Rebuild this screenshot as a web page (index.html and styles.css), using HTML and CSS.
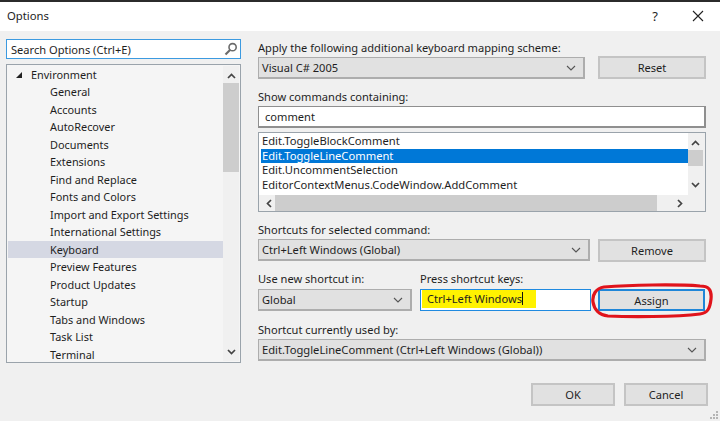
FILE: index.html
```html
<!DOCTYPE html>
<html lang="en">
<head>
<meta charset="utf-8">
<title>Options</title>
<link rel="stylesheet" href="styles.css">
</head>
<body>
<div class="dialog">
  <div class="edge"></div>
  <header class="titlebar">
    <span class="title">Options</span>
    <span class="help">?</span>
    <svg class="close" width="12" height="12" viewBox="0 0 12 12"><path d="M1 1l10 10M11 1L1 11" stroke="#222" stroke-width="1.1" fill="none"/></svg>
  </header>
  <main class="content">
    <section class="left">
      <div class="search">
        <span>Search Options (Ctrl+E)</span>
        <svg width="14" height="14" viewBox="0 0 14 14"><circle cx="8.6" cy="5.2" r="3.6" fill="none" stroke="#6b6b6b" stroke-width="1.6"/><path d="M6 8L1.5 12.5" stroke="#6b6b6b" stroke-width="2.2"/></svg>
      </div>
      <div class="tree">
        <ul class="nodes">
          <li class="root"><svg class="expander" width="8" height="8" viewBox="0 0 8 8"><path d="M7 1v6H1z" fill="#222"/></svg>Environment</li>
          <li>General</li>
          <li>Accounts</li>
          <li>AutoRecover</li>
          <li>Documents</li>
          <li>Extensions</li>
          <li>Find and Replace</li>
          <li>Fonts and Colors</li>
          <li>Import and Export Settings</li>
          <li>International Settings</li>
          <li class="current">Keyboard</li>
          <li>Preview Features</li>
          <li>Product Updates</li>
          <li>Startup</li>
          <li>Tabs and Windows</li>
          <li>Task List</li>
          <li>Terminal</li>
        </ul>
        <div class="vbar tree-bar">
          <svg width="9" height="6" viewBox="0 0 9 6"><path d="M1 5l3.5-3.5L8 5" fill="none" stroke="#444" stroke-width="1.7"/></svg>
          <div class="track"><div class="thumb"></div></div>
          <svg width="9" height="6" viewBox="0 0 9 6"><path d="M1 1l3.5 3.5L8 1" fill="none" stroke="#444" stroke-width="1.7"/></svg>
        </div>
      </div>
    </section>
    <section class="right">
      <label class="label first">Apply the following additional keyboard mapping scheme:</label>
      <div class="row">
        <div class="combo grow"><span>Visual C# 2005</span><svg class="chev" width="10" height="6" viewBox="0 0 10 6"><path d="M1 1l4 4 4-4" fill="none" stroke="#555" stroke-width="1.1"/></svg></div>
        <button class="btn side">Reset</button>
      </div>
      <label class="label gap-a">Show commands containing:</label>
      <div class="textbox">comment</div>
      <div class="listbox">
        <div class="listmain">
          <ul class="items">
            <li>Edit.ToggleBlockComment</li>
            <li class="sel">Edit.ToggleLineComment</li>
            <li>Edit.UncommentSelection</li>
            <li>EditorContextMenus.CodeWindow.AddComment</li>
          </ul>
          <div class="vbar list-bar">
            <svg width="9" height="6" viewBox="0 0 9 6"><path d="M1 5l3.5-3.5L8 5" fill="none" stroke="#444" stroke-width="1.7"/></svg>
            <div class="list-track"><div class="list-thumb"></div></div>
            <svg width="9" height="6" viewBox="0 0 9 6"><path d="M1 1l3.5 3.5L8 1" fill="none" stroke="#444" stroke-width="1.7"/></svg>
          </div>
        </div>
        <div class="hbar">
          <svg width="6" height="9" viewBox="0 0 6 9"><path d="M5 1L1.5 4.5 5 8" fill="none" stroke="#444" stroke-width="1.7"/></svg>
          <div class="hthumb"></div>
          <svg width="6" height="9" viewBox="0 0 6 9"><path d="M1 1l3.5 3.5L1 8" fill="none" stroke="#444" stroke-width="1.7"/></svg>
        </div>
      </div>
      <label class="label gap-b">Shortcuts for selected command:</label>
      <div class="row">
        <div class="combo grow"><span>Ctrl+Left Windows (Global)</span><svg class="chev" width="10" height="6" viewBox="0 0 10 6"><path d="M1 1l4 4 4-4" fill="none" stroke="#555" stroke-width="1.1"/></svg></div>
        <button class="btn side-short">Remove</button>
      </div>
      <div class="row triple">
        <div class="field scope">
          <label class="label">Use new shortcut in:</label>
          <div class="combo"><span>Global</span><svg class="chev" width="10" height="6" viewBox="0 0 10 6"><path d="M1 1l4 4 4-4" fill="none" stroke="#555" stroke-width="1.1"/></svg></div>
        </div>
        <div class="field keys">
          <label class="label">Press shortcut keys:</label>
          <div class="keybox"><span class="marked">Ctrl+Left Windows<i class="caret"></i></span></div>
        </div>
        <div class="assign-wrap">
          <button class="btn assign">Assign</button>
          <svg class="ring" width="124" height="36" viewBox="0 0 124 36"><path d="M14 4C40 2 85 1 110 3c8 0 12 3 11 13-1 9-3 14-11 15-25 3-70 3-92 2C9 32 4 26 3 19 2 12 6 5 14 4z" fill="none" stroke="#e0141c" stroke-width="3.2"/></svg>
        </div>
      </div>
      <label class="label gap-c">Shortcut currently used by:</label>
      <div class="combo wide-text"><span>Edit.ToggleLineComment (Ctrl+Left Windows (Global))</span><svg class="chev" width="10" height="6" viewBox="0 0 10 6"><path d="M1 1l4 4 4-4" fill="none" stroke="#555" stroke-width="1.1"/></svg></div>
      <div class="actions">
        <button class="btn action">OK</button>
        <button class="btn action">Cancel</button>
      </div>
    </section>
    <svg class="grip" width="9" height="9" viewBox="0 0 9 9"><path d="M6 0h2v2H6zM3 3h2v2H3zM6 3h2v2H6zM0 6h2v2H0zM3 6h2v2H3zM6 6h2v2H6z" fill="#b5b5b5"/></svg>
  </main>
</div>
</body>
</html>
```
FILE: styles.css
```css
* { box-sizing: border-box; }
html, body { margin: 0; padding: 0; }
body {
  width: 720px;
  height: 421px;
  overflow: hidden;
  font-family: "Noto Sans", "Open Sans", sans-serif;
  font-size: 11.1px;
  color: #1e1e1e;
}
ul { list-style: none; margin: 0; padding: 0; }
.dialog { display: flex; flex-direction: column; height: 421px; }
.edge { height: 2px; background: #2b2b2b; }
.titlebar {
  height: 29px;
  background: #fff;
  display: flex;
  align-items: center;
  padding: 0 16px 2px 7px;
}
.title { flex: 1; font-size: 11.3px; }
.help { font-size: 13px; margin-right: 34px; }
.content {
  position: relative;
  flex: 1;
  display: flex;
  background: #f0f0f0;
  padding: 8px 14px 0 6px;
}
.left { width: 235px; margin-right: 17px; }
.search {
  height: 20px;
  background: #fff;
  border: 1px solid #3c9ae0;
  display: flex;
  align-items: center;
  justify-content: space-between;
  padding: 0 2px 0 4px;
}
.tree {
  height: 299px;
  margin-top: 5px;
  background: #f5f5f5;
  border: 1px solid #9aa3ab;
  display: flex;
  padding: 1px;
  overflow: hidden;
  font-size: 10.9px;
}
.nodes { flex: 1; overflow: hidden; margin-top: -0.5px; }
.nodes li {
  height: 17.5px;
  line-height: 17.5px;
  padding-left: 42px;
  white-space: nowrap;
}
.nodes .root { padding-left: 23px; position: relative; }
.expander { position: absolute; left: 7px; top: 5px; }
.nodes .current { background: #d5d8e3; }
.vbar {
  display: flex;
  flex-direction: column;
  align-items: center;
  justify-content: space-between;
  background: #f0f0f0;
}
.tree-bar { width: 16px; padding: 7px 0 6px; }
.track { flex: 1; width: 100%; margin: 4px 0; }
.thumb { height: 89px; background: #cdcdcd; }
.right { flex: 1; display: flex; flex-direction: column; }
.label { display: block; height: 15px; line-height: 15px; white-space: nowrap; }
.first { margin-top: 1px; margin-bottom: 2px; }
.gap-a { margin-top: 10px; margin-bottom: 2px; }
.gap-b { margin-top: 10px; margin-bottom: 2px; }
.gap-c { margin-top: 11px; margin-bottom: 2px; }
.row { display: flex; justify-content: space-between; }
.grow { flex: 1; }
.combo {
  height: 22px;
  background: #e1e1e1;
  border: 1px solid #adadad;
  border-width: 1px 2px 2px 1px;
  display: flex;
  align-items: center;
  justify-content: space-between;
  padding: 0 7px 0 3px;
  white-space: nowrap;
}
.wide-text { font-size: 11.2px; }
.btn {
  height: 23px;
  background: #e1e1e1;
  border: 2px solid #c4c4c4;
  color: #1e1e1e;
  font: inherit;
  padding: 0;
}
.side { width: 108px; margin-left: 13px; margin-top: -1px; }
.side-short { width: 108px; margin-left: 8px; }
.textbox {
  height: 22px;
  background: #fff;
  border: 1px solid #8f8f8f;
  border-width: 1px 2px 2px 1px;
  padding-left: 6px;
  line-height: 19px;
}
.listbox {
  height: 80px;
  margin-top: 4px;
  background: #f0f0f0;
  border: 1px solid #9aa3ab;
  display: flex;
  flex-direction: column;
  padding-right: 2px;
  font-size: 11.2px;
}
.listmain { display: flex; height: 62px; }
.items { flex: 1; background: #fff; padding: 1px 0 0 2px; }
.items li { height: 14.6px; line-height: 14.6px; padding-left: 1px; white-space: nowrap; }
.items .sel { background: #0078d7; color: #fff; }
.list-bar { width: 15px; padding: 7px 0 7px; }
.list-track { flex: 1; width: 100%; padding-top: 4px; }
.list-thumb { height: 16px; background: #cdcdcd; }
.hbar {
  flex: 1;
  display: flex;
  align-items: center;
  padding: 0 20px 0 7px;
}
.hthumb { flex: 1; align-self: stretch; background: #cdcdcd; margin: 0 20px 0 3px; }
.triple { margin-top: 9px; justify-content: flex-start; }
.field { display: flex; flex-direction: column; gap: 3px; }
.scope { width: 154px; }
.keys { width: 171px; margin-left: 8px; }
.keybox {
  height: 22px;
  background: #fff;
  border: 1px solid #1f8ae0;
  line-height: 17px;
  padding-left: 1px;
}
.marked {
  display: inline-block;
  height: 18px;
  width: 114px;
  padding-left: 5px;
  background: #fff200;
  white-space: nowrap;
  position: relative;
}
.caret {
  display: inline-block;
  width: 1px;
  height: 13px;
  background: #111;
  vertical-align: -2px;
}
.assign-wrap { position: relative; margin-left: 7px; margin-top: 18px; }
.assign {
  width: 107px;
  height: 22px;
  border: 2px solid #1f86d8;
  display: block;
}
.ring { position: absolute; left: -8px; top: -6px; }
.actions { display: flex; justify-content: flex-end; gap: 9px; margin-top: 22px; margin-right: -2px; }
.action { width: 84px; }
.grip { position: absolute; right: 1px; bottom: 1px; }
```
